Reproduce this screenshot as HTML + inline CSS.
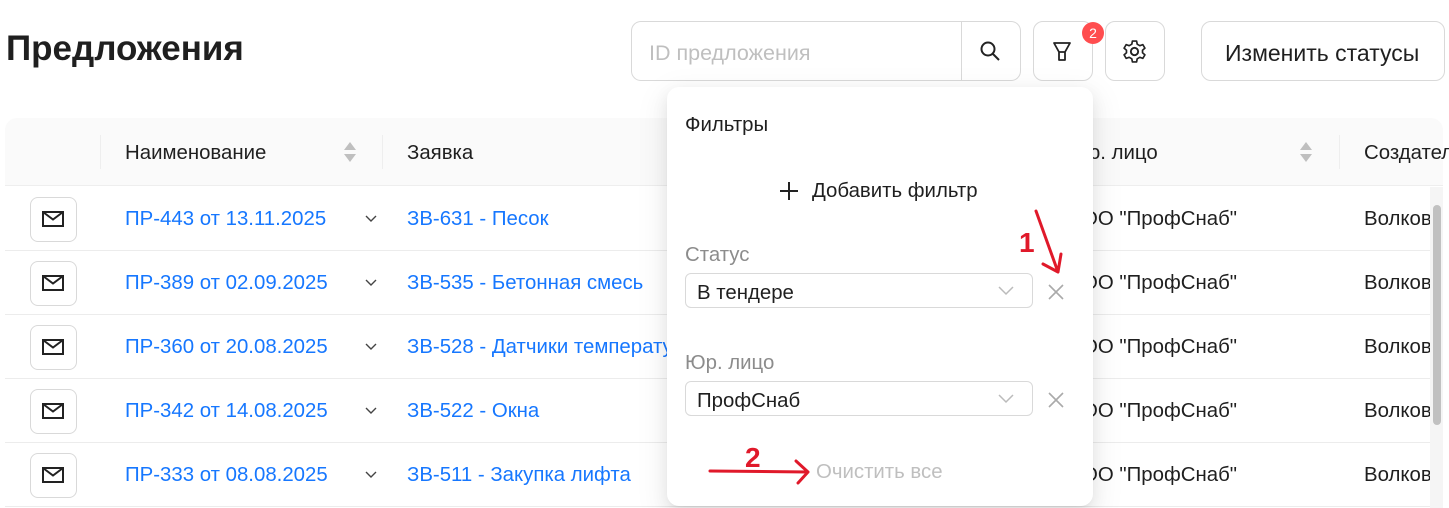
<!DOCTYPE html>
<html><head><meta charset="utf-8"><style>
*{box-sizing:border-box;margin:0;padding:0}
body{width:1449px;height:508px;overflow:hidden;background:#fff;font-family:"Liberation Sans","DejaVu Sans",sans-serif;color:#1f1f1f;position:relative;font-size:20.4px}
.a{position:absolute}
.t{white-space:nowrap}
.link{color:#1677ff}
.btn{position:absolute;border:1px solid #d9d9d9;border-radius:10px;background:#fff}
.row{position:absolute;left:5px;width:1425px;height:64px;border-bottom:1px solid #ececec}
.mail{position:absolute;left:25px;top:10px;width:47px;height:45px;border:1px solid #d9d9d9;border-radius:8px;background:#fff}
.sel{position:absolute;left:685px;width:348px;height:35px;border:1px solid #d9d9d9;border-radius:6px;background:#fff}
</style></head><body>
<div class="a t" style="left:6px;top:29px;font-size:35px;font-weight:bold">Предложения</div>

<div class="btn" style="left:631px;top:21px;width:390px;height:60px"></div>
<div class="a" style="left:961px;top:22px;width:1px;height:58px;background:#d9d9d9"></div>
<div class="a t" style="left:649px;top:41px;color:#bfbfbf;font-size:21.5px">ID предложения</div>
<svg class="a" style="left:979px;top:40px" width="22" height="22" viewBox="0 0 22 22"><circle cx="9" cy="9" r="6.5" fill="none" stroke="#222" stroke-width="2"/><path d="M14 14l6 6" stroke="#222" stroke-width="2"/></svg>
<div class="btn" style="left:1033px;top:21px;width:60px;height:60px"></div>
<svg class="a" style="left:1051px;top:40px" width="22" height="24" viewBox="0 0 22 24"><path d="M3 3h16l-5 9v8h-6v-8z M8 12h6" fill="none" stroke="#222" stroke-width="1.8" stroke-linejoin="round"/></svg>
<div class="a" style="left:1082px;top:22px;width:22px;height:22px;border-radius:11px;background:#ff4d4f;color:#fff;font-size:14px;text-align:center;line-height:22px">2</div>
<div class="btn" style="left:1105px;top:21px;width:60px;height:60px"></div>
<svg class="a" style="left:1122px;top:39px" width="25" height="25" viewBox="0 0 24 24"><circle cx="12" cy="12" r="3.5" fill="none" stroke="#222" stroke-width="1.8"/><path d="M10 2h4l.6 3 2.5 1.4 2.9-1 2 3.4-2.3 2v2.4l2.3 2-2 3.4-2.9-1-2.5 1.4-.6 3h-4l-.6-3-2.5-1.4-2.9 1-2-3.4 2.3-2v-2.4l-2.3-2 2-3.4 2.9 1L9.4 5z" fill="none" stroke="#222" stroke-width="1.6" stroke-linejoin="round"/></svg>
<div class="btn" style="left:1201px;top:21px;width:244px;height:60px"></div>
<div class="a t" style="left:1225px;top:40px;font-size:23px">Изменить статусы</div>

<div class="a" style="left:5px;top:118px;width:1438px;height:68px;background:#fafafa;border-radius:12px 12px 0 0;border-bottom:1px solid #eee"></div>
<div class="a" style="left:100px;top:135px;width:1px;height:34px;background:#eee"></div>
<div class="a" style="left:382px;top:135px;width:1px;height:34px;background:#eee"></div>
<div class="a" style="left:1339px;top:135px;width:1px;height:34px;background:#eee"></div>
<div class="a t" style="left:125px;top:142px">Наименование</div>
<div class="a t" style="left:407px;top:142px">Заявка</div>
<div class="a t" style="left:1085px;top:142px">ю. лицо</div>
<div class="a t" style="left:1364px;top:142px">Создатель</div>
<svg class="a" style="left:343px;top:140px" width="14" height="24"><path d="M7 2l6 8H1z M7 22l6-8H1z" fill="#bfbfbf"/></svg>
<svg class="a" style="left:1299px;top:140px" width="14" height="24"><path d="M7 2l6 8H1z M7 22l6-8H1z" fill="#bfbfbf"/></svg>

<div class="row" style="top:187px"><div class="mail"></div></div>
<div class="row" style="top:251px"><div class="mail"></div></div>
<div class="row" style="top:315px"><div class="mail"></div></div>
<div class="row" style="top:379px"><div class="mail"></div></div>
<div class="row" style="top:443px"><div class="mail"></div></div>

<svg class="a" style="left:0;top:0" width="1449" height="508">
<g fill="none" stroke="#222" stroke-width="2">
<rect x="43" y="212" width="20" height="14"/><path d="M43 212l10 7.5 10-7.5"/>
<rect x="43" y="276" width="20" height="14"/><path d="M43 276l10 7.5 10-7.5"/>
<rect x="43" y="340" width="20" height="14"/><path d="M43 340l10 7.5 10-7.5"/>
<rect x="43" y="404" width="20" height="14"/><path d="M43 404l10 7.5 10-7.5"/>
<rect x="43" y="468" width="20" height="14"/><path d="M43 468l10 7.5 10-7.5"/>
</g>
<g fill="none" stroke="#444" stroke-width="1.4">
<path d="M366 216l5 5 5-5M366 280l5 5 5-5M366 344l5 5 5-5M366 408l5 5 5-5M366 472l5 5 5-5"/>
</g>
</svg>

<div class="a t link" style="left:125px;top:208px">ПР-443 от 13.11.2025</div>
<div class="a t link" style="left:125px;top:272px">ПР-389 от 02.09.2025</div>
<div class="a t link" style="left:125px;top:336px">ПР-360 от 20.08.2025</div>
<div class="a t link" style="left:125px;top:400px">ПР-342 от 14.08.2025</div>
<div class="a t link" style="left:125px;top:464px">ПР-333 от 08.08.2025</div>
<div class="a t link" style="left:407px;top:208px">ЗВ-631 - Песок</div>
<div class="a t link" style="left:407px;top:272px">ЗВ-535 - Бетонная смесь</div>
<div class="a t link" style="left:407px;top:336px">ЗВ-528 - Датчики температуры</div>
<div class="a t link" style="left:407px;top:400px">ЗВ-522 - Окна</div>
<div class="a t link" style="left:407px;top:464px">ЗВ-511 - Закупка лифта</div>
<div class="a t" style="left:1082px;top:208px">ОО "ПрофСнаб"</div>
<div class="a t" style="left:1082px;top:272px">ОО "ПрофСнаб"</div>
<div class="a t" style="left:1082px;top:336px">ОО "ПрофСнаб"</div>
<div class="a t" style="left:1082px;top:400px">ОО "ПрофСнаб"</div>
<div class="a t" style="left:1082px;top:464px">ОО "ПрофСнаб"</div>
<div class="a t" style="left:1364px;top:208px">Волков</div>
<div class="a t" style="left:1364px;top:272px">Волков</div>
<div class="a t" style="left:1364px;top:336px">Волков</div>
<div class="a t" style="left:1364px;top:400px">Волков</div>
<div class="a t" style="left:1364px;top:464px">Волков</div>
<div class="a" style="left:1430px;top:187px;width:13px;height:321px;background:#f5f5f5"></div>
<div class="a" style="left:1433px;top:205px;width:8px;height:220px;background:#c1c1c1;border-radius:4px"></div>

<div class="a" style="left:667px;top:87px;width:426px;height:419px;background:#fff;border-radius:12px;box-shadow:0 6px 16px rgba(0,0,0,.08),0 3px 6px -4px rgba(0,0,0,.12),0 9px 28px 8px rgba(0,0,0,.05)"></div>
<div class="a t" style="left:685px;top:114px">Фильтры</div>
<svg class="a" style="left:779px;top:181px" width="20" height="20"><path d="M10 1v18M1 10h18" stroke="#222" stroke-width="2"/></svg>
<div class="a t" style="left:812px;top:180px">Добавить фильтр</div>
<div class="a t" style="left:685px;top:244px;color:#8c8c8c">Статус</div>
<div class="sel" style="top:273px"></div>
<div class="a t" style="left:697px;top:282px">В тендере</div>
<div class="a t" style="left:685px;top:352px;color:#8c8c8c">Юр. лицо</div>
<div class="sel" style="top:381px"></div>
<div class="a t" style="left:697px;top:390px">ПрофСнаб</div>
<div class="a t" style="left:816px;top:461px;color:#bfbfbf">Очистить все</div>
<svg class="a" style="left:0;top:0" width="1449" height="508">
<g fill="none" stroke="#bbb" stroke-width="1.5"><path d="M999 287l7 7 7-7M999 395l7 7 7-7"/></g>
<g fill="none" stroke="#aaa" stroke-width="1.6"><path d="M1049 285l14 14M1063 285l-14 14M1049 393l14 14M1063 393l-14 14"/></g>
<g fill="none" stroke="#e0192a" stroke-width="3" stroke-linecap="round" stroke-linejoin="round">
<path d="M1036 211l22 61M1043 264l15 8 3-18"/>
<path d="M710 471l98 1M796 461l12 11-10 11"/>
</g>
<text x="1019" y="252" fill="#e0192a" font-size="28" font-weight="bold" font-family="Liberation Sans">1</text>
<text x="745" y="467" fill="#e0192a" font-size="28" font-weight="bold" font-family="Liberation Sans">2</text>
</svg>
</body></html>
